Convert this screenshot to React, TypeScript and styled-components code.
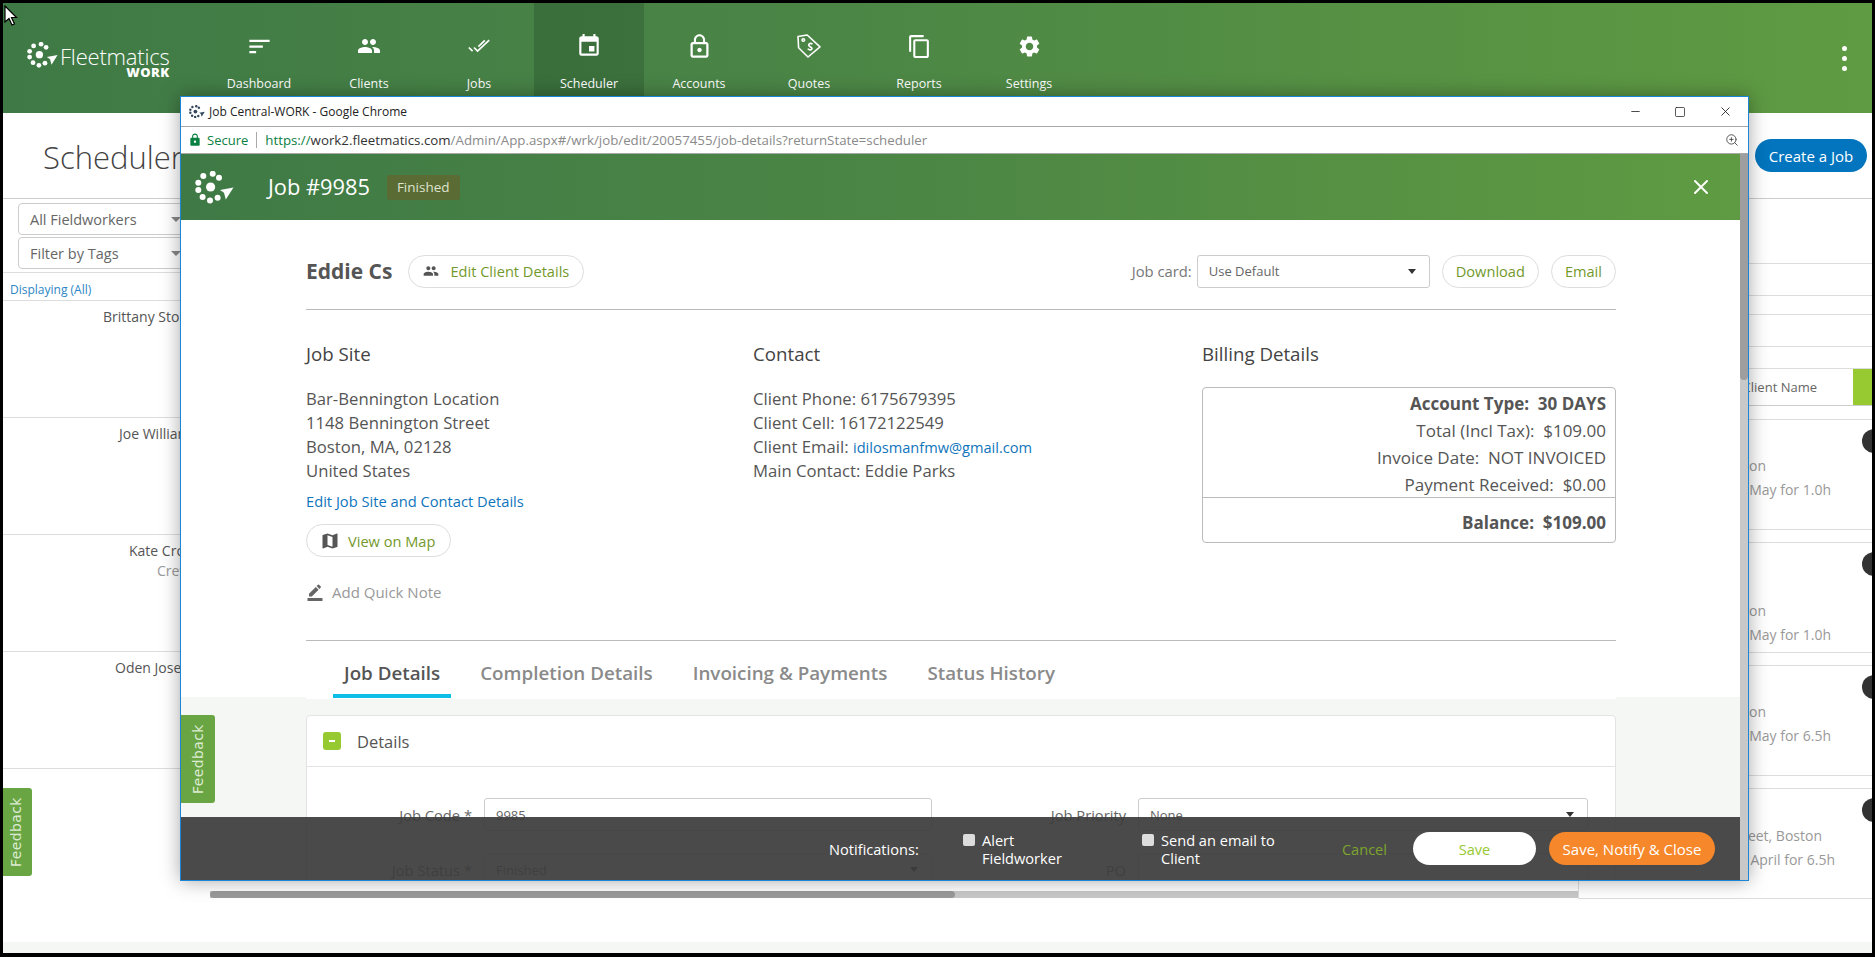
import React from 'react';
import styled, { createGlobalStyle } from 'styled-components';
import {
  MdBorderColor,
  MdContentCopy,
  MdEvent,
  MdLock,
  MdLockOutline,
  MdMap,
  MdPeople,
  MdSettings,
  MdSort,
} from 'react-icons/md';
import { ZoomIn, X, Minus, Square } from 'lucide-react';

const GlobalStyle = createGlobalStyle`
  html, body { margin: 0; padding: 0; background: #000; }
  * { box-sizing: border-box; }
  body { font-family: "Open Sans", "Liberation Sans", sans-serif; color: #555; }
`;

function LogoMark({ size, color }: { size: number; color: string }) {
  const dots = [
    [17.7, 2.8],
    [24, 6.7],
    [8.3, 5],
    [3.3, 11.7],
    [3.3, 19],
    [7.6, 26],
    [15, 29.4],
    [22.6, 26.7],
  ];
  return (
    <svg width={size} height={(size * 33) / 39} viewBox="0 0 39 33" fill={color}>
      {dots.map(([x, y]) => (
        <circle key={`${x}-${y}`} cx={x} cy={y} r="3" />
      ))}
      <circle cx="15.6" cy="16" r="4.6" />
      <polygon points="25,19 38.5,16.5 30.8,28.5 29,21.8" />
    </svg>
  );
}

function QuoteIcon() {
  return (
    <svg width="24" height="24" viewBox="0 0 24 24" fill="none" stroke="#fff" strokeWidth="1.6">
      <path d="M1 2.5 L10.2 1 L23 12.8 L11 23 L1.6 13.8 Z" strokeLinejoin="round" />
      <circle cx="6.3" cy="6" r="1.3" />
      <path d="M15.5 10.2 C13.5 8.6 10.8 9.8 12 11.8 C13.2 13.6 16 13.4 14.6 15.4 C13.6 16.4 11.5 15.6 10.8 14.6" />
    </svg>
  );
}

function JobsIcon() {
  return (
    <svg width="22" height="14" viewBox="0 0 22 14" fill="none" stroke="#fff" strokeWidth="1.7">
      <path d="M0.8 8.5 L4.6 12.2" />
      <path d="M6 8.5 L9.6 12 L21.2 1.2" />
      <path d="M10.4 7.6 L16.8 1.4" />
    </svg>
  );
}

const navItems = [
  { label: 'Dashboard', icon: <MdSort size={27} /> },
  { label: 'Clients', icon: <MdPeople size={24} /> },
  { label: 'Jobs', icon: <JobsIcon /> },
  { label: 'Scheduler', icon: <MdEvent size={26} />, active: true },
  { label: 'Accounts', icon: <MdLockOutline size={27} /> },
  { label: 'Quotes', icon: <QuoteIcon /> },
  { label: 'Reports', icon: <MdContentCopy size={25} /> },
  { label: 'Settings', icon: <MdSettings size={25} /> },
];

const workers = [
  { name: 'Brittany Stone', indent: 100 },
  { name: 'Joe Williams', indent: 116 },
  { name: 'Kate Crowley', sub: 'Crew', indent: 126, subIndent: 154 },
  { name: 'Oden Joseph', indent: 112 },
];

const jobCards = [
  { address: 'Bennington, Boston', addressEnd: 106, when: 'Thu 3 May for 1.0h', whenEnd: 41, pad: 34 },
  { address: 'Bennington, Boston', addressEnd: 106, when: 'Thu 3 May for 1.0h', whenEnd: 41, pad: 56 },
  { address: 'Bennington, Boston', addressEnd: 106, when: 'Fri 4 May for 6.5h', whenEnd: 41, pad: 34 },
  { address: 'Meridian Street, Boston', addressEnd: 50, when: 'Mon 30 April for 6.5h', whenEnd: 37, pad: 35 },
];

const billingLines = [
  { text: 'Account Type:\u00a0\u00a030 DAYS', strong: true },
  { text: 'Total (Incl Tax):\u00a0\u00a0$109.00' },
  { text: 'Invoice Date:\u00a0\u00a0NOT INVOICED' },
  { text: 'Payment Received:\u00a0\u00a0$0.00' },
];

export default function App() {
  return (
    <>
      <GlobalStyle />
      <Frame>
        <Page>
          <TopNav>
            <Brand>
              <LogoMark size={31} color="#fff" />
              <BrandText>
                <BrandName>Fleetmatics</BrandName>
                <BrandSub>WORK</BrandSub>
              </BrandText>
            </Brand>
            {navItems.map(item => (
              <NavItem key={item.label} $active={item.active}>
                <NavIcon>{item.icon}</NavIcon>
                <span>{item.label}</span>
              </NavItem>
            ))}
            <MoreDots>
              <i />
              <i />
              <i />
            </MoreDots>
          </TopNav>

          <PageHead>
            <PageTitle>Scheduler</PageTitle>
            <CreateJob>Create a Job</CreateJob>
          </PageHead>

          <PageBody>
            <LeftColumn>
              <Filters>
                <FilterBox>
                  All Fieldworkers <Caret />
                </FilterBox>
                <FilterBox>
                  Filter by Tags <Caret />
                </FilterBox>
              </Filters>
              <Displaying>Displaying (All)</Displaying>
              {workers.map(w => (
                <WorkerRow key={w.name}>
                  <WorkerName $indent={w.indent}>{w.name}</WorkerName>
                  {w.sub && <WorkerSub $indent={w.subIndent ?? 0}>{w.sub}</WorkerSub>}
                </WorkerRow>
              ))}
            </LeftColumn>

            <CenterColumn>
              <HScroll>
                <HThumb />
              </HScroll>
            </CenterColumn>

            <RightColumn>
              <RightStripes>
                <RightStripe $height={65} />
                <RightStripe $height={32} />
                <RightStripe $height={19} />
                <RightStripe $height={32} />
              </RightStripes>
              <ListHead>
                <ListHeadLabel>Client Name</ListHeadLabel>
                <ListHeadToggle />
              </ListHead>
              {jobCards.map((card, i) => (
                <JobCard key={i} $pad={card.pad}>
                  <CardBullet />
                  <CardLine $end={card.addressEnd}>{card.address}</CardLine>
                  <CardLine $end={card.whenEnd}>{card.when}</CardLine>
                </JobCard>
              ))}
            </RightColumn>
          </PageBody>
          <PageFooter />
        </Page>

        <FeedbackTab $left={3} $top={788} $w={29} $h={88} $shift={4}>
          Feedback
        </FeedbackTab>

        <Cursor width="14" height="22" viewBox="0 0 14 22">
          <path d="M1 1 V17 L5 13.5 L8 20 L10.5 19 L7.5 12.5 H12.5 Z" fill="#fff" stroke="#000" strokeWidth="1.2" />
        </Cursor>

        <ChromeWindow>
          <TitleBar>
            <LogoMark size={16} color="#34495e" />
            <TitleText>Job Central-WORK - Google Chrome</TitleText>
            <WindowControls>
              <Minus size={13} strokeWidth={1.4} />
              <Square size={12} strokeWidth={1.4} />
              <X size={15} strokeWidth={1.3} />
            </WindowControls>
          </TitleBar>
          <AddressBar>
            <LockSlot>
              <MdLock size={14} color="#0b8043" />
            </LockSlot>
            <SecureText>Secure</SecureText>
            <AddressSep />
            <Url>
              <UrlScheme>https://</UrlScheme>
              <UrlHost>work2.fleetmatics.com</UrlHost>/Admin/App.aspx#/wrk/job/edit/20057455/job-details?returnState=scheduler
            </Url>
            <ZoomGlyph>
              <ZoomIn size={14} strokeWidth={1.5} />
            </ZoomGlyph>
          </AddressBar>

          <WindowBody>
            <Content>
              <JobHeader>
                <JobLogo>
                  <LogoMark size={39} color="#fff" />
                </JobLogo>
                <JobTitle>Job #9985</JobTitle>
                <StatusBadge>Finished</StatusBadge>
                <JobClose>
                  <X size={24} strokeWidth={2} />
                </JobClose>
              </JobHeader>

              <Inset>
                <ClientRow>
                  <ClientName>Eddie Cs</ClientName>
                  <EditClientButton>
                    <MdPeople size={16} color="#555" />
                    Edit Client Details
                  </EditClientButton>
                  <JobCardGroup>
                    <JobCardLabel>Job card:</JobCardLabel>
                    <CardSelect>
                      Use Default
                      <CardCaret />
                    </CardSelect>
                    <PillButton>Download</PillButton>
                    <PillButton>Email</PillButton>
                  </JobCardGroup>
                </ClientRow>

                <InfoGrid>
                  <div>
                    <SectionTitle>Job Site</SectionTitle>
                    <InfoLines>
                      <div>Bar-Bennington Location</div>
                      <div>1148 Bennington Street</div>
                      <div>Boston, MA, 02128</div>
                      <div>United States</div>
                    </InfoLines>
                    <BlueLink>Edit Job Site and Contact Details</BlueLink>
                    <MapButton>
                      <MdMap size={20} color="#555" />
                      View on Map
                    </MapButton>
                    <QuickNote>
                      <MdBorderColor size={18} color="#666" />
                      Add Quick Note
                    </QuickNote>
                  </div>
                  <div>
                    <SectionTitle>Contact</SectionTitle>
                    <InfoLines>
                      <div>Client Phone: 6175679395</div>
                      <div>Client Cell: 16172122549</div>
                      <div>
                        Client Email: <EmailLink>idilosmanfmw@gmail.com</EmailLink>
                      </div>
                      <div>Main Contact: Eddie Parks</div>
                    </InfoLines>
                  </div>
                  <div>
                    <SectionTitle>Billing Details</SectionTitle>
                    <BillingBox>
                      <BillingTop>
                        {billingLines.map(line => (
                          <BillingLine key={line.text} $strong={line.strong}>
                            {line.text}
                          </BillingLine>
                        ))}
                      </BillingTop>
                      <BillingBalance>Balance:{'\u00a0\u00a0'}$109.00</BillingBalance>
                    </BillingBox>
                  </div>
                </InfoGrid>

                <Tabs>
                  <Tab $active>Job Details</Tab>
                  <Tab>Completion Details</Tab>
                  <Tab>Invoicing &amp; Payments</Tab>
                  <Tab>Status History</Tab>
                </Tabs>
              </Inset>

              <GreyArea>
                <DetailsPanel>
                  <PanelHead>
                    <CollapseBox />
                    <PanelTitle>Details</PanelTitle>
                  </PanelHead>
                  <FormGrid>
                    <FormLabel>Job Code *</FormLabel>
                    <FormControl>9985</FormControl>
                    <FormLabel>Job Priority</FormLabel>
                    <FormControl>
                      None
                      <CardCaret />
                    </FormControl>
                    <FormLabel>Job Status *</FormLabel>
                    <FormControl>
                      Finished
                      <CardCaret />
                    </FormControl>
                    <FormLabel>PO</FormLabel>
                    <FormControl />
                  </FormGrid>
                </DetailsPanel>
              </GreyArea>

              <FeedbackTab $left={0} $top={561} $w={34} $h={88} $shift={0}>
                Feedback
              </FeedbackTab>

              <ActionBar>
                <NotifyLabel>Notifications:</NotifyLabel>
                <NotifyOption $width={179}>
                  <NotifyCheck type="checkbox" />
                  <span>
                    Alert
                    <br />
                    Fieldworker
                  </span>
                </NotifyOption>
                <NotifyOption $width={186}>
                  <NotifyCheck type="checkbox" />
                  <span>
                    Send an email to
                    <br />
                    Client
                  </span>
                </NotifyOption>
                <CancelLink>Cancel</CancelLink>
                <SaveButton>Save</SaveButton>
                <SaveCloseButton>Save, Notify &amp; Close</SaveCloseButton>
              </ActionBar>
            </Content>
            <VScroll>
              <VThumb />
            </VScroll>
          </WindowBody>
        </ChromeWindow>
      </Frame>
    </>
  );
}

const Frame = styled.div`
  position: relative;
  width: 1875px;
  height: 957px;
  padding: 3px 3px 4px;
  background: #000;
  overflow: hidden;
`;

const Page = styled.div`
  height: 950px;
  display: flex;
  flex-direction: column;
  background: #fff;
  overflow: hidden;
`;

const TopNav = styled.header`
  height: 110px;
  flex: none;
  display: flex;
  background: linear-gradient(90deg, #3f7a46 0%, #4a8446 40%, #5f9b42 100%);
  color: #fff;
`;

const Brand = styled.div`
  width: 201px;
  display: flex;
  align-items: flex-start;
  gap: 2px;
  padding: 39px 0 0 24px;
`;

const BrandText = styled.div`
  display: flex;
  flex-direction: column;
  align-items: flex-end;
  margin-top: 4px;
`;

const BrandName = styled.span`
  font-size: 22px;
  font-weight: 300;
  line-height: 21px;
  letter-spacing: -0.2px;
`;

const BrandSub = styled.span`
  font-size: 13px;
  font-weight: 800;
  line-height: 11px;
  letter-spacing: 0.4px;
`;

const NavItem = styled.div<{ $active?: boolean }>`
  width: 110px;
  display: flex;
  flex-direction: column;
  align-items: center;
  padding-top: 29px;
  font-size: 12.5px;
  background: ${p => (p.$active ? 'rgba(30, 70, 40, 0.3)' : 'transparent')};
`;

const NavIcon = styled.div`
  height: 28px;
  margin-bottom: 15px;
  display: flex;
  align-items: center;
  justify-content: center;
`;

const MoreDots = styled.div`
  margin-left: auto;
  margin-right: 25px;
  padding-top: 43px;
  display: flex;
  flex-direction: column;
  gap: 5px;
  i {
    width: 5px;
    height: 5px;
    border-radius: 50%;
    background: #fff;
  }
`;

const PageHead = styled.div`
  height: 86px;
  flex: none;
  display: flex;
  justify-content: space-between;
  border-bottom: 1px solid #ccc;
  padding: 26px 5px 0 40px;
`;

const PageTitle = styled.h1`
  margin: 0;
  font-size: 31px;
  font-weight: 300;
  line-height: 36px;
  color: #444;
`;

const CreateJob = styled.button`
  width: 112px;
  height: 33px;
  border: 0;
  border-radius: 17px;
  background: #0275be;
  color: #fff;
  font: 15px "Open Sans", sans-serif;
`;

const PageBody = styled.div`
  flex: 1;
  min-height: 0;
  display: flex;
`;

const LeftColumn = styled.div`
  width: 207px;
`;

const Filters = styled.div`
  display: flex;
  flex-direction: column;
  gap: 2px;
  padding: 4px 0 3px 15px;
  height: 74px;
  border-bottom: 1px solid #ddd;
`;

const FilterBox = styled.div`
  width: 175px;
  height: 32px;
  border: 1px solid #ccc;
  border-radius: 4px;
  display: flex;
  align-items: center;
  justify-content: space-between;
  padding: 0 11px;
  font-size: 14.5px;
  color: #666;
`;

const Caret = styled.i`
  border: 5px solid transparent;
  border-top-color: #888;
  border-bottom: 0;
`;

const Displaying = styled.div`
  height: 28px;
  line-height: 34px;
  padding-left: 7px;
  font-size: 12px;
  color: #2b86c5;
  border-bottom: 1px solid #ddd;
`;

const WorkerRow = styled.div`
  height: 117px;
  padding-top: 6px;
  border-bottom: 1px solid #ddd;
  font-size: 14px;
  color: #555;
  white-space: nowrap;
`;

const WorkerName = styled.div<{ $indent: number }>`
  line-height: 20px;
  padding-left: ${p => p.$indent}px;
`;

const WorkerSub = styled.div<{ $indent: number }>`
  line-height: 20px;
  padding-left: ${p => p.$indent}px;
  color: #999;
`;

const CenterColumn = styled.div`
  flex: 1;
  display: flex;
  flex-direction: column;
  justify-content: flex-end;
  padding-bottom: 44px;
`;

const HScroll = styled.div`
  height: 7px;
  background: #c8c8c8;
`;

const HThumb = styled.div`
  width: 745px;
  height: 100%;
  border-radius: 4px;
  background: #999;
`;

const RightColumn = styled.div`
  width: 294px;
  height: 700px;
  border-left: 1px solid #ddd;
  border-bottom: 1px solid #ddd;
  display: flex;
  flex-direction: column;
`;

const RightStripes = styled.div`
  display: flex;
  flex-direction: column;
`;

const RightStripe = styled.div<{ $height: number }>`
  height: ${p => p.$height}px;
  border-bottom: 1px solid #ddd;
`;

const ListHead = styled.div`
  height: 38px;
  flex: none;
  margin-top: 21px;
  margin-bottom: 1px;
  display: flex;
  justify-content: flex-end;
  align-items: center;
  border-top: 1px solid #ddd;
  border-bottom: 1px solid #ccc;
`;

const ListHeadLabel = styled.span`
  margin-right: 36px;
  font-size: 13px;
  color: #666;
`;

const ListHeadToggle = styled.div`
  width: 19px;
  align-self: stretch;
  background: #97c931;
`;

const JobCard = styled.div<{ $pad: number }>`
  position: relative;
  flex: none;
  height: 111px;
  margin-top: 12px;
  padding-top: ${p => p.$pad}px;
  border-top: 1px solid #ddd;
  border-bottom: 1px solid #ddd;
  font-size: 14px;
  color: #999;
  white-space: nowrap;
`;

const CardBullet = styled.div`
  position: absolute;
  top: 9px;
  right: -14px;
  width: 24px;
  height: 24px;
  border-radius: 50%;
  background: #333;
`;

const CardLine = styled.div<{ $end: number }>`
  line-height: 24px;
  text-align: right;
  padding-right: ${p => p.$end}px;
`;

const PageFooter = styled.div`
  height: 11px;
  flex: none;
  background: #f5f7f5;
`;

const FeedbackTab = styled.div<{ $left: number; $top: number; $w: number; $h: number; $shift: number }>`
  position: absolute;
  left: ${p => p.$left}px;
  top: ${p => p.$top}px;
  width: ${p => p.$w}px;
  height: ${p => p.$h}px;
  padding-left: ${p => p.$shift}px;
  display: flex;
  align-items: center;
  justify-content: center;
  writing-mode: vertical-rl;
  transform: rotate(180deg);
  border-radius: 3px 0 0 3px;
  background: #6aa544;
  color: #dcebd2;
  font: 14px "DejaVu Sans", sans-serif;
  letter-spacing: 0.4px;
  z-index: 3;
`;

const Cursor = styled.svg`
  position: absolute;
  left: 4px;
  top: 5px;
  z-index: 5;
`;

const ChromeWindow = styled.div`
  position: absolute;
  left: 180px;
  top: 96px;
  width: 1569px;
  height: 785px;
  display: flex;
  flex-direction: column;
  background: #fff;
  border: 1px solid #1c86d6;
  box-shadow: 0 0 18px rgba(0, 0, 0, 0.35);
`;

const TitleBar = styled.div`
  height: 30px;
  flex: none;
  display: flex;
  align-items: center;
  padding: 0 0 0 8px;
  border-bottom: 1px solid #a8a8a8;
  font-size: 12px;
  color: #222;
`;

const TitleText = styled.span`
  margin-left: 4px;
`;

const WindowControls = styled.div`
  margin-left: auto;
  margin-right: 15px;
  display: flex;
  align-items: center;
  gap: 32px;
  color: #111;
`;

const AddressBar = styled.div`
  height: 27px;
  flex: none;
  display: flex;
  align-items: center;
  padding: 0 9px 0 7px;
  border-bottom: 1px solid #a8a8a8;
  font-size: 13.3px;
  color: #8a8a8a;
`;

const LockSlot = styled.span`
  display: flex;
  width: 14px;
`;

const SecureText = styled.span`
  margin-left: 5px;
  font-size: 13px;
  color: #0b8043;
`;

const AddressSep = styled.i`
  width: 1px;
  height: 16px;
  margin: 0 8px;
  background: #aaa;
`;

const Url = styled.span`
  white-space: nowrap;
`;

const UrlScheme = styled.span`
  color: #0b8043;
`;

const UrlHost = styled.span`
  color: #333;
`;

const ZoomGlyph = styled.span`
  margin-left: auto;
  display: flex;
  color: #444;
`;

const WindowBody = styled.div`
  flex: 1;
  min-height: 0;
  display: flex;
  position: relative;
`;

const Content = styled.div`
  position: relative;
  flex: 1;
  min-width: 0;
  overflow: hidden;
`;

const JobHeader = styled.div`
  height: 66px;
  display: flex;
  align-items: center;
  background: linear-gradient(90deg, #3f7a46 0%, #4d8745 50%, #5f9b42 100%);
  color: #fff;
`;

const JobLogo = styled.div`
  width: 87px;
  padding: 0 0 0 14px;
  display: flex;
`;

const JobTitle = styled.div`
  font-size: 21.8px;
  line-height: 28px;
`;

const StatusBadge = styled.div`
  margin-left: 17px;
  height: 25px;
  padding: 0 10px;
  line-height: 25px;
  font-size: 13.5px;
  border-radius: 3px;
  background: #5a6b34;
  color: #dfe3cf;
`;

const JobClose = styled.div`
  margin-left: auto;
  margin-right: 27px;
  display: flex;
`;

const Inset = styled.div`
  position: relative;
  z-index: 1;
  margin: 0 124px -2px 125px;
  background: #fff;
`;

const ClientRow = styled.div`
  height: 90px;
  padding: 35px 0 22px;
  display: flex;
  align-items: center;
  border-bottom: 1px solid #bbb;
`;

const ClientName = styled.div`
  margin-right: 16px;
  font-size: 21px;
  font-weight: 700;
  color: #555;
`;

const PillButton = styled.button`
  height: 33px;
  padding: 0 13px;
  display: inline-flex;
  align-items: center;
  gap: 10px;
  border: 1px solid #ddd;
  border-radius: 17px;
  background: #fff;
  color: #73992c;
  font: 14.6px "Open Sans", sans-serif;
`;

const EditClientButton = styled(PillButton)`
  padding: 0 14px;
  gap: 11px;
`;

const JobCardGroup = styled.div`
  margin-left: auto;
  display: flex;
  align-items: center;
  gap: 12px;
`;

const JobCardLabel = styled.span`
  margin-right: -7px;
  font-size: 14.8px;
  color: #777;
`;

const CardSelect = styled.div`
  position: relative;
  width: 233px;
  height: 33px;
  line-height: 31px;
  padding-left: 11px;
  border: 1px solid #ccc;
  border-radius: 3px;
  font-size: 13px;
  color: #666;
`;

const CardCaret = styled.i`
  position: absolute;
  right: 13px;
  top: 13px;
  border: 4px solid transparent;
  border-top: 5px solid #333;
  border-bottom: 0;
`;

const InfoGrid = styled.div`
  display: grid;
  grid-template-columns: 447px 449px 1fr;
  padding: 32px 0 38px;
  border-bottom: 1px solid #bbb;
  font-size: 16.7px;
  color: #555;
`;

const SectionTitle = styled.h3`
  margin: 0 0 21px;
  font-size: 18.7px;
  font-weight: 400;
  line-height: 24px;
  color: #444;
`;

const InfoLines = styled.div`
  line-height: 24px;
`;

const BlueLink = styled.a`
  display: block;
  margin-top: 8px;
  font-size: 14.7px;
  line-height: 20px;
  color: #0f75bc;
`;

const EmailLink = styled.a`
  font-size: 14.6px;
  color: #0f75bc;
`;

const MapButton = styled(PillButton)`
  margin-top: 13px;
  padding: 0 15px 0 13px;
  gap: 8px;
`;

const QuickNote = styled.div`
  margin-top: 25px;
  display: flex;
  align-items: center;
  gap: 8px;
  font-size: 15px;
  line-height: 20px;
  color: #999;
`;

const BillingBox = styled.div`
  height: 156px;
  border: 1px solid #bbb;
  border-radius: 4px;
  color: #555;
  text-align: right;
  font-size: 17px;
`;

const BillingTop = styled.div`
  height: 110px;
  padding: 2px 9px 0;
  border-bottom: 1px solid #bbb;
`;

const BillingLine = styled.div<{ $strong?: boolean }>`
  line-height: 27px;
  font-weight: ${p => (p.$strong ? 700 : 400)};
`;

const BillingBalance = styled.div`
  padding: 11px 9px 0;
  line-height: 27px;
  font-weight: 700;
`;

const Tabs = styled.div`
  height: 58px;
  display: flex;
  gap: 18px;
  padding-left: 27px;
`;

const Tab = styled.div<{ $active?: boolean }>`
  height: 57px;
  padding: 20px 11px 9px;
  line-height: 24px;
  font-size: 18.8px;
  font-weight: 600;
  color: ${p => (p.$active ? '#555' : '#8a8a8a')};
  border-bottom: 4px solid ${p => (p.$active ? '#0dbfe8' : 'transparent')};
`;

const GreyArea = styled.div`
  height: 400px;
  padding: 18px 124px 0 125px;
  background: #f5f7f5;
`;

const DetailsPanel = styled.div`
  background: #fff;
  border: 1px solid #e3e3e3;
  border-radius: 4px;
`;

const PanelHead = styled.div`
  height: 51px;
  display: flex;
  align-items: center;
  gap: 16px;
  padding-left: 16px;
  border-bottom: 1px solid #e3e3e3;
`;

const CollapseBox = styled.div`
  position: relative;
  width: 18px;
  height: 18px;
  border-radius: 3px;
  background: #97c931;
  &::after {
    content: '';
    position: absolute;
    left: 6px;
    top: 8px;
    width: 6px;
    height: 2px;
    background: #fff;
  }
`;

const PanelTitle = styled.span`
  font-size: 16.5px;
  color: #555;
`;

const FormGrid = styled.div`
  display: grid;
  grid-template-columns: 165px 448px 182px 450px;
  column-gap: 12px;
  row-gap: 22px;
  padding: 31px 0 0 0;
  align-items: center;
`;

const FormLabel = styled.div`
  text-align: right;
  font-size: 14.7px;
  color: #666;
`;

const FormControl = styled.div`
  position: relative;
  height: 33px;
  line-height: 33px;
  padding-left: 11px;
  border: 1px solid #ccc;
  border-radius: 3px;
  font-size: 13px;
  color: #666;
`;

const ActionBar = styled.div`
  position: absolute;
  z-index: 2;
  left: 0;
  right: 0;
  bottom: 0;
  height: 63px;
  display: flex;
  align-items: center;
  padding-right: 25px;
  background: rgba(60, 60, 60, 0.93);
  color: #fff;
  font-size: 14.6px;
`;

const NotifyLabel = styled.span`
  margin-left: 648px;
  width: 134px;
`;

const NotifyOption = styled.label<{ $width: number }>`
  width: ${p => p.$width}px;
  display: flex;
  gap: 7px;
  line-height: 18px;
`;

const NotifyCheck = styled.input`
  appearance: none;
  flex: none;
  width: 12px;
  height: 12px;
  margin: 3px 0 0;
  border-radius: 2px;
  background: #ddd;
`;

const CancelLink = styled.span`
  margin-left: auto;
  margin-right: 26px;
  color: #7da52c;
`;

const SaveButton = styled.button`
  width: 123px;
  height: 33px;
  border: 0;
  border-radius: 17px;
  background: #fff;
  color: #97c931;
  font: 14.6px "Open Sans", sans-serif;
`;

const SaveCloseButton = styled.button`
  width: 166px;
  height: 33px;
  margin-left: 13px;
  padding: 0;
  border: 0;
  border-radius: 17px;
  background: #f6872a;
  color: #fff;
  font: 15px "Open Sans", sans-serif;
`;

const VScroll = styled.div`
  width: 8px;
  flex: none;
  background: #c8c8c8;
`;

const VThumb = styled.div`
  height: 226px;
  background: #9e9e9e;
  border-radius: 0 0 4px 4px;
`;
